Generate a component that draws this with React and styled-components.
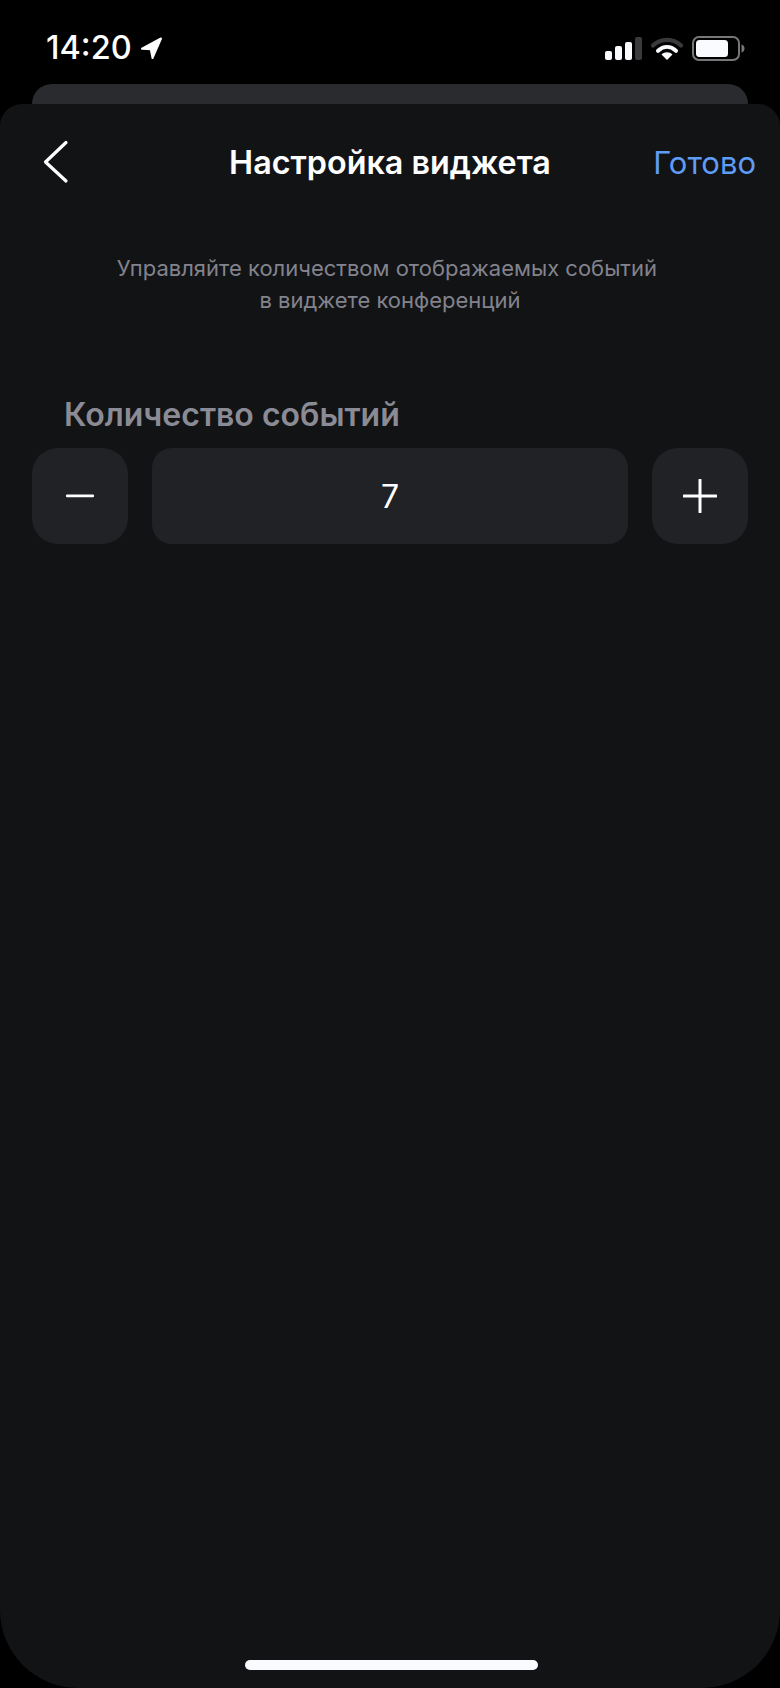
import React from "react";
import styled, { createGlobalStyle } from "styled-components";

const Global = createGlobalStyle`
  html, body { margin: 0; padding: 0; background: #000; }
  * { box-sizing: border-box; }
`;

const Screen = styled.div`
  width: 780px;
  height: 1688px;
  display: flex;
  flex-direction: column;
  background: #000;
  overflow: hidden;
  font-family: Inter, "Noto Sans", sans-serif;
  color: #fff;
`;

const StatusBar = styled.div`
  height: 84px;
  flex: none;
  padding: 0 35px 0 46px;
  display: flex;
  align-items: flex-start;
  justify-content: space-between;
`;

const TimeGroup = styled.div`
  display: flex;
  align-items: center;
  gap: 8px;
  padding-top: 30px;
`;

const Time = styled.span`
  font-size: 32.5px;
  line-height: 36px;
  font-weight: 500;
  color: #fff;
`;

const StatusIcons = styled.div`
  display: flex;
  align-items: center;
  gap: 9px;
  padding-top: 36px;
`;

const PeekCard = styled.div`
  height: 20px;
  flex: none;
  margin: 0 32px;
  background: #2a2b2f;
  border-radius: 22px 22px 0 0;
`;

const Sheet = styled.main`
  flex: 1;
  display: flex;
  flex-direction: column;
  background: #121315;
  border-radius: 22px 22px 78px 78px;
  position: relative;
`;

const NavBar = styled.header`
  height: 118px;
  flex: none;
  padding: 0 24px;
  display: grid;
  grid-template-columns: 1fr auto 1fr;
  align-items: center;
`;

const BackButton = styled.button`
  all: unset;
  display: flex;
  width: 28px;
  height: 46px;
  margin-left: 18px;
`;

const Title = styled.h1`
  margin: 0;
  font-size: 32.3px;
  line-height: 36px;
  font-weight: 600;
  color: #fff;
`;

const DoneButton = styled.button`
  all: unset;
  justify-self: end;
  font-size: 31px;
  line-height: 36px;
  font-weight: 400;
  color: #5f9cf5;
`;

const Hint = styled.p`
  margin: 30px 0 0;
  font-size: 22px;
  line-height: 32px;
  text-align: center;
  white-space: pre;
  color: #83838d;
`;

const Field = styled.section`
  margin-top: 81px;
  padding: 0 32px;
`;

const FieldLabel = styled.h2`
  margin: 0 0 15px;
  padding-left: 32px;
  font-size: 32px;
  line-height: 36px;
  font-weight: 600;
  color: #8b8b96;
`;

const Stepper = styled.div`
  display: grid;
  grid-template-columns: 96px 1fr 96px;
  gap: 24px;
  height: 96px;
`;

const StepButton = styled.button`
  all: unset;
  display: flex;
  align-items: center;
  justify-content: center;
  background: #212226;
  border-radius: 26px;
`;

const Value = styled.div`
  display: flex;
  align-items: center;
  justify-content: center;
  background: #212226;
  border-radius: 20px;
  font-size: 32px;
  color: #fff;
`;

const HomeIndicator = styled.div`
  position: absolute;
  left: 245px;
  bottom: 18px;
  width: 293px;
  height: 10px;
  border-radius: 5px;
  background: #fafbff;
`;

const LocationIcon = () => (
  <svg width="23" height="23" viewBox="0 0 23 23">
    <path d="M2 11.700 21 1.500 12.500 21 10.800 12.200Z" fill="#fff" stroke="#fff" strokeWidth="2" strokeLinejoin="round" />
  </svg>
);

const SignalIcon = () => (
  <svg width="37" height="23" viewBox="0 0 37 23">
    <rect x="0" y="14" width="7" height="9" rx="2" fill="#fafbff" />
    <rect x="10" y="9" width="7" height="14" rx="2" fill="#fafbff" />
    <rect x="20" y="5" width="7" height="18" rx="2" fill="#fafbff" />
    <rect x="30" y="0" width="7" height="23" rx="2" fill="#3a3a3c" />
  </svg>
);

const WifiIcon = () => (
  <svg width="32" height="23" viewBox="0 0 32 23">
    <path d="M2 8.500C10 1 22 1 30 8.500" fill="none" stroke="#3a3a3c" strokeWidth="4.200" strokeLinecap="round" />
    <path d="M7 13.800C12.500 8.800 19.500 8.800 25 13.800" fill="none" stroke="#fafbff" strokeWidth="4" strokeLinecap="round" />
    <path d="M16 23 10.500 17.500C13.500 14.600 18.500 14.600 21.500 17.500Z" fill="#fafbff" />
  </svg>
);

const BatteryIcon = () => (
  <svg width="53" height="25" viewBox="0 0 53 25">
    <rect x="1" y="1" width="46" height="23" rx="6" fill="none" stroke="#77777a" strokeWidth="2" />
    <rect x="4" y="4" width="32" height="17" rx="3.500" fill="#fafbff" />
    <path d="M49.500 8.500c2 .5 3 2.200 3 4s-1 3.500-3 4Z" fill="#77777a" />
  </svg>
);

export default function App() {
  return (
    <Screen>
      <Global />
      <StatusBar>
        <TimeGroup>
          <Time>14:20</Time>
          <LocationIcon />
        </TimeGroup>
        <StatusIcons>
          <SignalIcon />
          <WifiIcon />
          <BatteryIcon />
        </StatusIcons>
      </StatusBar>
      <PeekCard />
      <Sheet>
        <NavBar>
          <BackButton aria-label="Назад">
            <svg width="28" height="46" viewBox="0 0 28 46">
              <path d="M24 2.500 3.500 22 24 41" fill="none" stroke="#fff" strokeWidth="3.200" strokeLinecap="round" strokeLinejoin="round" />
            </svg>
          </BackButton>
          <Title>Настройка виджета</Title>
          <DoneButton>Готово</DoneButton>
        </NavBar>
        <Hint>
          {"Управляйте количеством отображаемых событий "}
          <br />в виджете конференций
        </Hint>
        <Field>
          <FieldLabel>Количество событий</FieldLabel>
          <Stepper>
            <StepButton aria-label="Уменьшить">
              <svg width="30" height="4" viewBox="0 0 30 4">
                <rect x="1" y="0.500" width="28" height="2.800" rx="1" fill="#fff" />
              </svg>
            </StepButton>
            <Value>7</Value>
            <StepButton aria-label="Увеличить">
              <svg width="34" height="34" viewBox="0 0 34 34">
                <path d="M17 1v32M1 17h32" fill="none" stroke="#fff" strokeWidth="3" strokeLinecap="round" />
              </svg>
            </StepButton>
          </Stepper>
        </Field>
        <HomeIndicator />
      </Sheet>
    </Screen>
  );
}
